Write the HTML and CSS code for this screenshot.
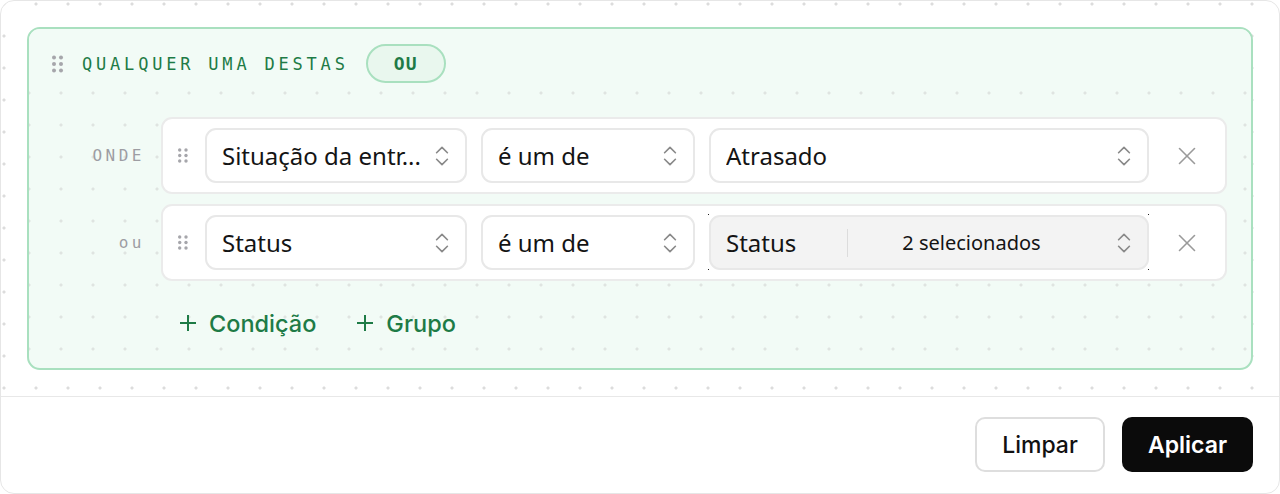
FILE: index.html
```html
<!DOCTYPE html>
<html lang="pt-BR">
<head>
    <meta charset="UTF-8">
    <meta name="viewport" content="width=device-width, initial-scale=1.0">
    <title>Filtros</title>
    <link rel="stylesheet" href="styles.css">
</head>
<body>
    <div class="card">
        <div class="card-body">
            <section class="group">
                <div class="group-head">
                    <svg class="grip grip-lg" width="12" height="18" viewBox="0 0 12 18">
                        <circle cx="2" cy="2.5" r="2"/><circle cx="9" cy="2.5" r="2"/>
                        <circle cx="2" cy="9" r="2"/><circle cx="9" cy="9" r="2"/>
                        <circle cx="2" cy="15.5" r="2"/><circle cx="9" cy="15.5" r="2"/>
                    </svg>
                    <span class="group-title">QUALQUER UMA DESTAS</span>
                    <button class="op-pill">OU</button>
                </div>

                <div class="conditions">
                    <div class="cond-row">
                        <span class="cond-label">ONDE</span>
                        <div class="cond-card">
                            <svg class="grip" width="10" height="15" viewBox="0 0 10 15">
                                <circle cx="1.7" cy="2" r="1.7"/><circle cx="8" cy="2" r="1.7"/>
                                <circle cx="1.7" cy="7.5" r="1.7"/><circle cx="8" cy="7.5" r="1.7"/>
                                <circle cx="1.7" cy="13" r="1.7"/><circle cx="8" cy="13" r="1.7"/>
                            </svg>
                            <div class="select sel-field">
                                <span class="select-text">Situação da entr...</span>
                                <svg class="chev" width="26" height="26" viewBox="0 0 24 24"><path d="m7 15 5 5 5-5"/><path d="m7 9 5-5 5 5"/></svg>
                            </div>
                            <div class="select sel-op">
                                <span class="select-text">é um de</span>
                                <svg class="chev" width="26" height="26" viewBox="0 0 24 24"><path d="m7 15 5 5 5-5"/><path d="m7 9 5-5 5 5"/></svg>
                            </div>
                            <div class="select sel-value">
                                <span class="select-text">Atrasado</span>
                                <svg class="chev" width="26" height="26" viewBox="0 0 24 24"><path d="m7 15 5 5 5-5"/><path d="m7 9 5-5 5 5"/></svg>
                            </div>
                            <button class="remove">
                                <svg width="30" height="30" viewBox="0 0 24 24"><path d="M18 6 6 18"/><path d="m6 6 12 12"/></svg>
                            </button>
                        </div>
                    </div>

                    <div class="cond-row">
                        <span class="cond-label">ou</span>
                        <div class="cond-card">
                            <svg class="grip" width="10" height="15" viewBox="0 0 10 15">
                                <circle cx="1.7" cy="2" r="1.7"/><circle cx="8" cy="2" r="1.7"/>
                                <circle cx="1.7" cy="7.5" r="1.7"/><circle cx="8" cy="7.5" r="1.7"/>
                                <circle cx="1.7" cy="13" r="1.7"/><circle cx="8" cy="13" r="1.7"/>
                            </svg>
                            <div class="select sel-field">
                                <span class="select-text">Status</span>
                                <svg class="chev" width="26" height="26" viewBox="0 0 24 24"><path d="m7 15 5 5 5-5"/><path d="m7 9 5-5 5 5"/></svg>
                            </div>
                            <div class="select sel-op">
                                <span class="select-text">é um de</span>
                                <svg class="chev" width="26" height="26" viewBox="0 0 24 24"><path d="m7 15 5 5 5-5"/><path d="m7 9 5-5 5 5"/></svg>
                            </div>
                            <div class="select sel-value sel-multi">
                                <span class="select-text">Status</span>
                                <span class="multi-divider"></span>
                                <span class="multi-count">2 selecionados</span>
                                <svg class="chev" width="26" height="26" viewBox="0 0 24 24"><path d="m7 15 5 5 5-5"/><path d="m7 9 5-5 5 5"/></svg>
                            </div>
                            <button class="remove">
                                <svg width="30" height="30" viewBox="0 0 24 24"><path d="M18 6 6 18"/><path d="m6 6 12 12"/></svg>
                            </button>
                        </div>
                    </div>

                    <div class="add-row">
                        <button class="add-btn">
                            <svg width="18" height="18" viewBox="0 0 18 18"><path d="M9 1v16"/><path d="M1 9h16"/></svg>
                            Condição
                        </button>
                        <button class="add-btn">
                            <svg width="18" height="18" viewBox="0 0 18 18"><path d="M9 1v16"/><path d="M1 9h16"/></svg>
                            Grupo
                        </button>
                    </div>
                </div>
            </section>
        </div>

        <div class="card-foot">
            <button class="btn btn-outline">Limpar</button>
            <button class="btn btn-dark">Aplicar</button>
        </div>
    </div>
</body>
</html>
```

FILE: styles.css
```css
body {
    margin: 0;
    background-color: #ffffff;
    font-family: 'Inter', sans-serif;
    color: #111;
}

button {
    font-family: inherit;
    cursor: pointer;
}

.card {
    width: 1280px;
    height: 494px;
    box-sizing: border-box;
    border: 1px solid #e6e6e6;
    border-radius: 14px;
    overflow: hidden;
    display: flex;
    flex-direction: column;
}

.card-body {
    padding: 26px 26px 26px 26px;
    background-image: radial-gradient(circle, #dcdcdc 1.2px, transparent 1.9px);
    background-size: 32px 32px;
    background-position: -13px -13px;
}

/* green "any of" group */
.group {
    border: 2px solid #a9e0bf;
    border-radius: 13px;
    background-color: #f2fbf6;
    background-image: radial-gradient(circle, #dfe4e1 1.2px, transparent 1.9px);
    background-size: 32px 32px;
    background-position: -16px -16px;
    padding: 0 24px 23px 23px;
    overflow: hidden;
}

.group-head {
    display: flex;
    align-items: center;
    margin: 0 -24px 0 -23px;
    padding: 15px 24px 8px 23px;
    background-color: #f2fbf6;
}

.grip {
    fill: #a6a6ab;
    flex-shrink: 0;
}

.grip-lg {
    margin-right: 18px;
}

.group-title {
    font-family: 'DejaVu Sans Mono', monospace;
    font-size: 17px;
    letter-spacing: 3.8px;
    color: #1e7b46;
}

.op-pill {
    margin-left: 17px;
    height: 39px;
    width: 80px;
    border: 2px solid #a9e0bf;
    border-radius: 20px;
    background-color: #e9f7ee;
    color: #1e7b46;
    font-family: 'DejaVu Sans Mono', monospace;
    font-weight: bold;
    font-size: 18px;
    letter-spacing: 1px;
    padding: 0;
}

.conditions {
    margin-top: 26px;
    display: flex;
    flex-direction: column;
    gap: 10px;
}

.cond-row {
    display: flex;
    align-items: center;
    gap: 19px;
}

.cond-label {
    width: 93px;
    flex-shrink: 0;
    text-align: right;
    font-family: 'DejaVu Sans Mono', monospace;
    font-size: 16px;
    letter-spacing: 3.5px;
    margin-right: -3px;
    color: #9d9da3;
}

.cond-card {
    flex: 1;
    display: flex;
    align-items: center;
    background-color: #fff;
    border: 2px solid #ebebeb;
    border-radius: 11px;
    padding: 9px 14px 9px 15px;
}

.cond-card .grip {
    margin-right: 17px;
}

.select {
    height: 55px;
    box-sizing: border-box;
    display: flex;
    align-items: center;
    border: 2px solid #e8e8e8;
    border-radius: 11px;
    background-color: #fff;
    padding: 0 10px 0 15px;
    font-family: 'Noto Sans', sans-serif;
    font-size: 24px;
    color: #141414;
}

.select + .select {
    margin-left: 14px;
}

.select-text {
    flex: 1;
    white-space: nowrap;
    overflow: hidden;
}

.chev {
    fill: none;
    stroke: #8a8a8a;
    stroke-width: 1.5;
    stroke-linecap: round;
    stroke-linejoin: round;
    flex-shrink: 0;
}

.sel-field {
    width: 262px;
}

.sel-op {
    width: 214px;
}

.sel-value {
    flex: 1;
}

.sel-multi {
    position: relative;
    background-color: #f3f3f3;
}

.sel-multi .select-text {
    flex: none;
    width: 121px;
}

.sel-multi::before {
    content: "";
    position: absolute;
    inset: -3px -2px -2px -3px;
    background:
        linear-gradient(#222, #222) left top / 1px 1px no-repeat,
        linear-gradient(#222, #222) right top / 1px 1px no-repeat,
        linear-gradient(#222, #222) left bottom / 1px 1px no-repeat,
        linear-gradient(#222, #222) right bottom / 1px 1px no-repeat;
}

.multi-divider {
    width: 1px;
    height: 28px;
    background-color: #dcdcdc;
}

.multi-count {
    flex: 1;
    text-align: center;
    font-size: 20px;
    padding-right: 16px;
}

.remove {
    margin-left: 14px;
    width: 48px;
    height: 48px;
    border: none;
    background: none;
    padding: 0;
    display: flex;
    align-items: center;
    justify-content: center;
}

.remove svg {
    fill: none;
    stroke: #9a9a9a;
    stroke-width: 1.3;
    stroke-linecap: round;
}

.add-row {
    margin-top: 10px;
    margin-left: 109px;
    display: flex;
    gap: 4px;
}

.add-btn {
    height: 44px;
    display: flex;
    align-items: center;
    gap: 12px;
    border: none;
    background: none;
    padding: 0 18px;
    font-size: 23.5px;
    font-weight: 500;
    color: #1e7b46;
}

.add-btn svg {
    fill: none;
    stroke: #1e7b46;
    stroke-width: 2;
}

/* footer actions */
.card-foot {
    flex: 1;
    border-top: 1px solid #e8e8e8;
    display: flex;
    justify-content: flex-end;
    align-items: flex-start;
    gap: 17px;
    padding: 20px 26px 0 0;
}

.btn {
    height: 55px;
    width: 130px;
    border-radius: 10px;
    font-size: 23px;
    font-weight: 500;
}

.btn-outline {
    background-color: #fff;
    border: 2px solid #dedede;
    color: #111;
}

.btn-dark {
    width: 131px;
    background-color: #0b0b0b;
    border: none;
    color: #fff;
    font-weight: 600;
}
```
